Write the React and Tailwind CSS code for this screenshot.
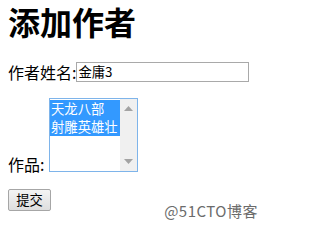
import React from 'react';

const books = ['天龙八部', '射雕英雄壮'];

function ListBox() {
  return (
    <div className="flex h-[74px] w-[89px] border border-[#7eb4ea] bg-white">
      <div className="flex-1 pt-[1px]">
        {books.map((b) => (
          <div key={b} className="h-[18px] bg-[#3399ff] pl-[1px] text-[13.33px] leading-[18px] text-white whitespace-nowrap">
            {b}
          </div>
        ))}
      </div>
      {/* scrollbar */}
      <div className="flex w-[17px] flex-col items-center justify-between bg-[#f0f0f0] py-[7px]">
        <svg width="9" height="5" viewBox="0 0 9 5"><path d="M4.5 0 L9 5 L0 5 Z" fill="#a3a3a3" /></svg>
        <svg width="9" height="5" viewBox="0 0 9 5"><path d="M0 0 L9 0 L4.5 5 Z" fill="#a3a3a3" /></svg>
      </div>
    </div>
  );
}

export default function App() {
  return (
    <div className="relative h-[228px] w-[267px] overflow-hidden bg-white px-2 font-['Noto_Sans_CJK_SC',sans-serif] text-black">
      <h1 className="text-[32px] font-bold leading-[42px]">添加作者</h1>

      <div className="mt-[20px] flex h-[20px] items-center">
        <span className="text-[16px] leading-[20px]">作者姓名:</span>
        <div className="flex h-[20px] w-[173px] items-center border border-[#a9a9a9] px-[1px] text-[13.33px] leading-[16px]">
          金庸3
        </div>
      </div>

      <div className="mt-[16px] flex items-end">
        <span className="mb-[-2px] w-[41px] text-[16px] leading-[20px]">作品:</span>
        <ListBox />
      </div>

      <button
        type="button"
        className="mt-[17px] flex h-[22px] w-[43px] items-center justify-center rounded-[2px] border border-[#a6a6a6] bg-gradient-to-b from-[#f4f4f4] to-[#dedede] text-[13.33px] leading-[16px]"
      >
        提交
      </button>

      <div className="absolute bottom-[9px] right-[9px] text-[15px] leading-[16px] tracking-[0.5px] text-[#6b6b6b]">@51CTO博客</div>
    </div>
  );
}
